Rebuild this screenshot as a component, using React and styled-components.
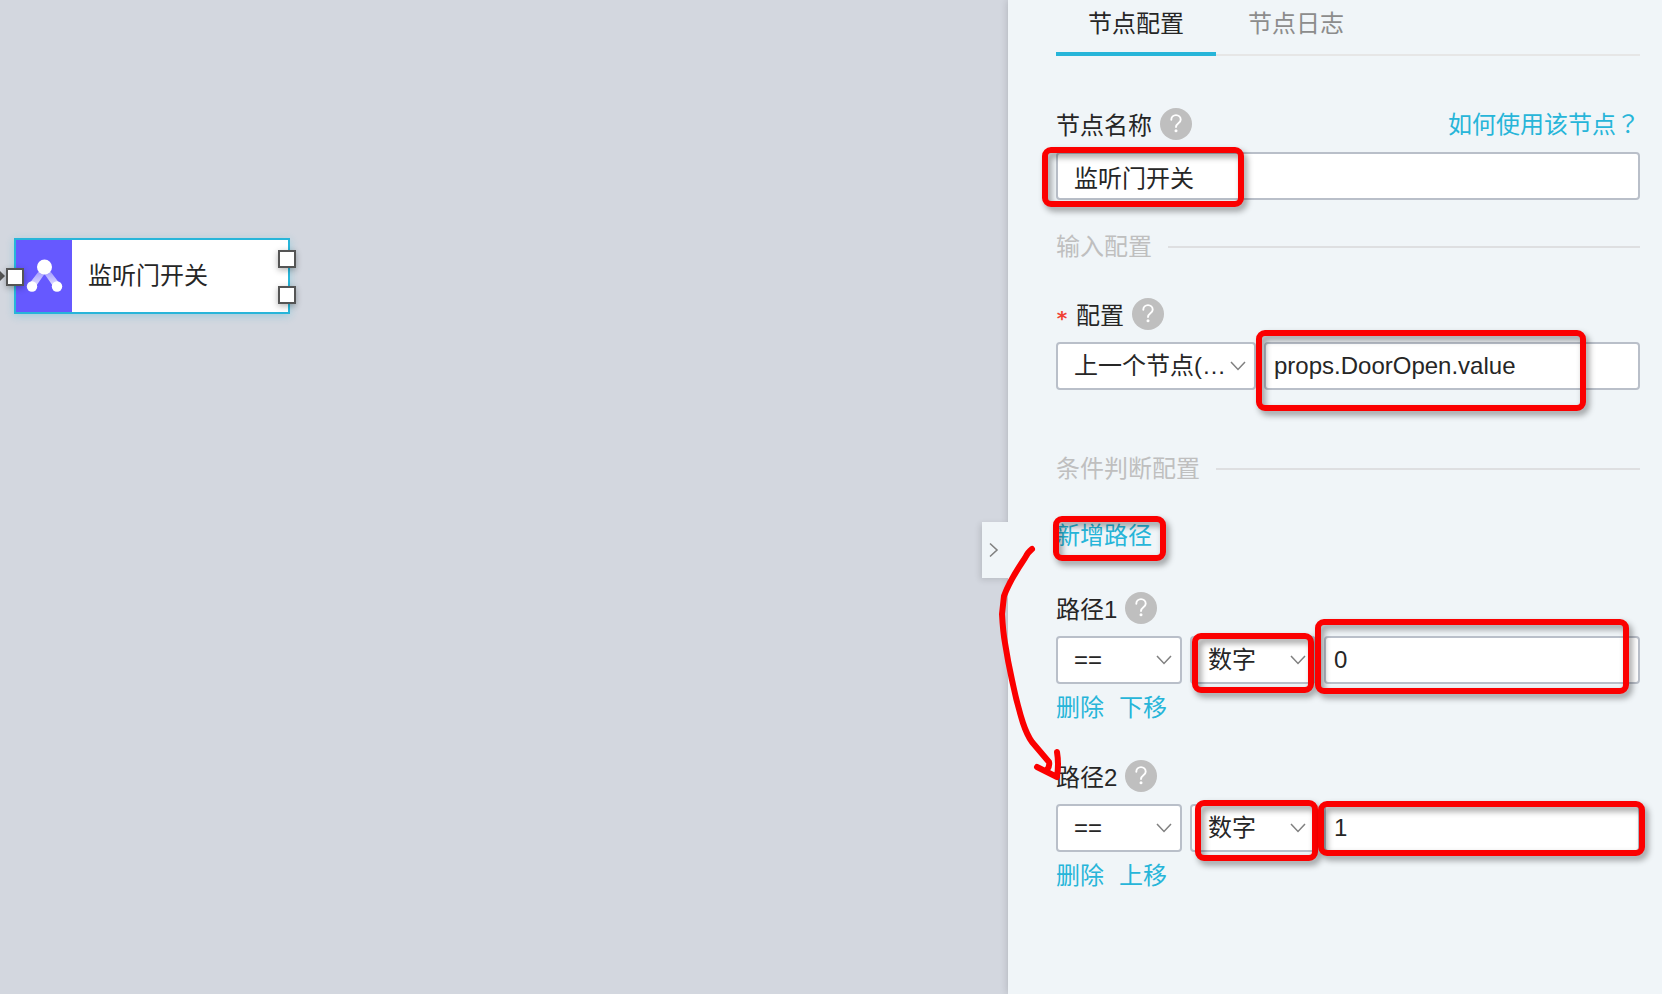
import React, { useState } from 'react'
import styled, { createGlobalStyle } from 'styled-components'

const GlobalStyle = createGlobalStyle`
  * {
    box-sizing: border-box;
  }

  body {
    margin: 0;
    background: #d3d7df;
  }

  body,
  button,
  input,
  select {
    font-family: 'Liberation Sans', 'Noto Sans CJK SC', sans-serif;
    font-size: 24px;
    line-height: 32px;
    color: #262626;
  }
`

const Page = styled.div`
  display: grid;
  grid-template-columns: minmax(0, 1008fr) minmax(560px, 654fr);
  min-height: 100vh;
  overflow: hidden;
`

const Canvas = styled.main`
  position: relative;
  background: #d3d7df;
`

const Node = styled.div`
  position: absolute;
  left: 14px;
  top: 238px;
  display: flex;
  width: 276px;
  height: 76px;
  background: #fff;
  border: 2px solid #27b5d9;
  box-shadow: 0 2px 8px rgb(39 181 217 / 30%);
`

const NodeIcon = styled.div`
  width: 56px;
  background: #6659ff;

  svg {
    display: block;
  }
`

const NodeName = styled.div`
  display: flex;
  align-items: center;
  padding-left: 16px;
`

const Port = styled.span`
  position: absolute;
  left: ${({ $x }) => $x}px;
  top: ${({ $y }) => $y}px;
  width: 18px;
  height: 18px;
  background: #fff;
  border: 2px solid #555;
  box-shadow: 0 2px 6px rgb(0 0 0 / 30%);
`

const EdgeEnd = styled.svg`
  position: absolute;
  left: 0;
  top: 270px;
`

const Panel = styled.aside`
  position: relative;
  padding: 0 22px 48px 48px;
  background: #f0f5f8;
  box-shadow: 0 0 8px rgb(0 0 0 / 18%);
`

const CollapseButton = styled.button`
  position: absolute;
  left: -26px;
  top: 522px;
  display: flex;
  align-items: center;
  justify-content: center;
  width: 26px;
  height: 56px;
  padding: 0 2px 0 0;
  border: none;
  background: #f0f5f8;
  box-shadow: -2px 2px 6px rgb(0 0 0 / 12%);
  clip-path: inset(-8px 0 -8px -8px);
`

const Tabs = styled.div`
  display: flex;
  margin-bottom: 52px;
  box-shadow: inset 0 -2px #e6e6e6;
`

const Tab = styled.button`
  height: 56px;
  padding: 4px 32px 8px;
  border: none;
  border-bottom: 4px solid ${({ $active }) => ($active ? '#27b5d9' : 'transparent')};
  background: none;
  color: ${({ $active }) => ($active ? '#262626' : '#8c8c8c')};
`

const LabelRow = styled.div`
  display: flex;
  align-items: center;
  gap: 8px;
  height: 32px;
  margin-bottom: 12px;

  label {
    padding-top: 4px;
  }
`

const Required = styled.span`
  padding-top: 8px;
  font-family: 'DejaVu Sans Mono', monospace;
  font-size: 20px;
  font-weight: 700;
  color: #f04134;
`

const HelpButton = styled.button`
  width: 32px;
  height: 32px;
  padding: 0;
  border: none;
  border-radius: 50%;
  background: #bfbfbf;

  svg {
    display: block;
  }
`

const TextLink = styled.a`
  color: #27b5d9;
  text-decoration: none;
`

const HelpLink = styled(TextLink)`
  margin-left: auto;

  span {
    font-family: 'Noto Sans CJK TC', sans-serif;
  }
`

const FieldRow = styled.div`
  display: flex;
  gap: 8px;
`

const Field = styled.div`
  position: relative;
  flex: ${({ $width }) => ($width ? `0 0 ${$width}px` : '1 1 0')};
  min-width: 0;
`

const Input = styled.input`
  display: block;
  width: 100%;
  height: 48px;
  padding: 0 ${({ $wide }) => ($wide ? 16 : 8)}px;
  border: 2px solid #b9bfc9;
  border-radius: 4px;
  background: #fff;
  outline: none;
`

const Select = styled.select`
  display: block;
  width: 100%;
  height: 48px;
  padding: 0 24px 0 16px;
  border: 2px solid #b9bfc9;
  border-radius: 4px;
  background: #fff;
  appearance: none;
  outline: none;
`

const Chevron = styled.svg`
  position: absolute;
  right: 10px;
  top: 19px;
  pointer-events: none;
`

const Divider = styled.h2`
  display: flex;
  align-items: center;
  gap: 16px;
  height: 34px;
  margin: ${({ $top }) => $top}px 0 34px;
  font-size: 24px;
  font-weight: 400;
  color: #bfbfbf;

  &::after {
    content: '';
    flex: 1;
    height: 2px;
    background: #dedfe1;
  }
`

const AddPath = styled.div`
  position: relative;
  height: 32px;
  margin-bottom: 40px;
`

const PathItem = styled.section`
  margin-bottom: 36px;
`

const Actions = styled.div`
  display: flex;
  gap: 15px;
  margin-top: 8px;
`

// red frame drawn over a control
const Mark = styled.span`
  position: absolute;
  z-index: 1;
  left: ${({ $left }) => $left}px;
  right: ${({ $right }) => $right}px;
  top: ${({ $top }) => $top}px;
  width: ${({ $width }) => ($width ? `${$width}px` : 'auto')};
  height: ${({ $height }) => $height}px;
  border: 6px solid #fb0000;
  border-radius: 9px;
  filter: drop-shadow(3px 4px 3px rgb(0 0 0 / 40%));
  pointer-events: none;
`

const Arrow = styled.svg`
  position: absolute;
  z-index: 1;
  left: -60px;
  top: 20px;
  pointer-events: none;
`

const Help = () => (
  <HelpButton type="button" aria-label="?">
    <svg width="32" height="32" viewBox="0 0 32 32" fill="none">
      <path
        d="M11.300 11.800a4.700 4.700 0 1 1 9.400 0c0 3.400-4.700 3.600-4.700 7.200"
        stroke="#fff"
        strokeWidth="1.900"
        strokeLinecap="round"
      />
      <circle cx="16" cy="22.700" r="1.500" fill="#fff" />
    </svg>
  </HelpButton>
)

const SelectField = ({ id, label, width, value, children }) => (
  <Field $width={width}>
    <Select id={id} aria-label={label} defaultValue={value}>
      <option value={value}>{value}</option>
    </Select>
    <Chevron width="16" height="10" viewBox="0 0 16 10" fill="none">
      <path d="M1 1l7 7.500 7-7.500" stroke="#808080" strokeWidth="1.500" />
    </Chevron>
    {children}
  </Field>
)

const paths = [
  {
    id: 1,
    value: '0',
    move: '下移',
    typeMark: { $left: 2, $top: -3, $width: 122, $height: 60 },
    valueMark: { $left: -9, $right: 11, $top: -17, $height: 75 },
  },
  {
    id: 2,
    value: '1',
    move: '上移',
    typeMark: { $left: 5, $top: -4, $width: 123, $height: 61 },
    valueMark: { $left: -6, $right: -5, $top: -3, $height: 55 },
  },
]

const Path = ({ path }) => (
  <PathItem>
    <LabelRow>
      <label htmlFor={`path-${path.id}`}>路径{path.id}</label>
      <Help />
    </LabelRow>
    <FieldRow>
      <SelectField id={`path-${path.id}`} width={126} value="==" />
      <SelectField label={`路径${path.id}`} width={126} value="数字">
        <Mark {...path.typeMark} />
      </SelectField>
      <Field>
        <Input aria-label={`路径${path.id}`} defaultValue={path.value} />
        <Mark {...path.valueMark} />
      </Field>
    </FieldRow>
    <Actions>
      <TextLink href="#">删除</TextLink>
      <TextLink href="#">{path.move}</TextLink>
    </Actions>
  </PathItem>
)

const FlowNode = () => (
  <>
    <EdgeEnd width="5" height="12" viewBox="0 0 5 12">
      <path d="M0 1l5 5-5 5z" fill="#555" />
    </EdgeEnd>
    <Node>
      <NodeIcon>
        <svg width="56" height="72" viewBox="0 0 56 72">
          <defs>
            <linearGradient id="leg" x1="0" y1="0" x2="0" y2="1">
              <stop offset="0.2" stopColor="#fff" stopOpacity="0.4" />
              <stop offset="1" stopColor="#fff" stopOpacity="0.9" />
            </linearGradient>
          </defs>
          <path
            d="M26 27l5 0L44 44l-5 5L28.500 34 18 49l-5-5z"
            fill="url(#leg)"
          />
          <circle cx="28.500" cy="27" r="7.500" fill="#fff" />
          <circle cx="16" cy="46.500" r="5.200" fill="#fff" />
          <circle cx="41" cy="46.500" r="5.200" fill="#fff" />
        </svg>
      </NodeIcon>
      <NodeName>监听门开关</NodeName>
      <Port $x={-10} $y={28} />
      <Port $x={262} $y={10} />
      <Port $x={262} $y={46} />
    </Node>
  </>
)

const App = () => {
  const [tab, setTab] = useState('节点配置')

  return (
    <Page>
      <GlobalStyle />
      <Canvas>
        <FlowNode />
      </Canvas>
      <Panel>
        <CollapseButton type="button" aria-label=">">
          <svg width="10" height="16" viewBox="0 0 10 16" fill="none">
            <path d="M1 1.500L8 8l-7 6.500" stroke="#808080" strokeWidth="1.600" />
          </svg>
        </CollapseButton>
        <Tabs role="tablist">
          {['节点配置', '节点日志'].map((name) => (
            <Tab
              key={name}
              type="button"
              role="tab"
              aria-selected={tab === name}
              $active={tab === name}
              onClick={() => setTab(name)}
            >
              {name}
            </Tab>
          ))}
        </Tabs>

        <LabelRow>
          <label htmlFor="name">节点名称</label>
          <Help />
          <HelpLink href="#">
            如何使用该节点<span>？</span>
          </HelpLink>
        </LabelRow>
        <Field>
          <Input id="name" $wide defaultValue="监听门开关" />
          <Mark $left={-14} $top={-5} $width={202} $height={60} />
        </Field>

        <Divider $top={30}>输入配置</Divider>
        <LabelRow>
          <Required>*</Required>
          <label htmlFor="source">配置</label>
          <Help />
        </LabelRow>
        <FieldRow>
          <SelectField id="source" width={200} value="上一个节点(…" />
          <Field>
            <Input aria-label="配置" defaultValue="props.DoorOpen.value" />
            <Mark $left={-8} $top={-12} $width={330} $height={81} />
          </Field>
        </FieldRow>

        <Divider $top={62}>条件判断配置</Divider>
        <AddPath>
          <TextLink href="#">新增路径</TextLink>
          <Mark $left={-3} $top={-4} $width={113} $height={45} />
          <Arrow width="70" height="250" viewBox="996 540 70 250" fill="none">
            <path
              d="M1032 549Q1028 552 1025 558Q1010 580 1004 596L1002 614Q1003 632 1005 643Q1008 662 1012 680Q1017 704 1023 723Q1027 735 1032 742L1049 762Q1050 766 1047 770M1037 767L1057 777Q1059 764 1057 752"
              stroke="#fb0000"
              strokeWidth="6"
              strokeLinecap="round"
              strokeLinejoin="round"
            />
          </Arrow>
        </AddPath>

        {paths.map((path) => (
          <Path key={path.id} path={path} />
        ))}
      </Panel>
    </Page>
  )
}

export default App
